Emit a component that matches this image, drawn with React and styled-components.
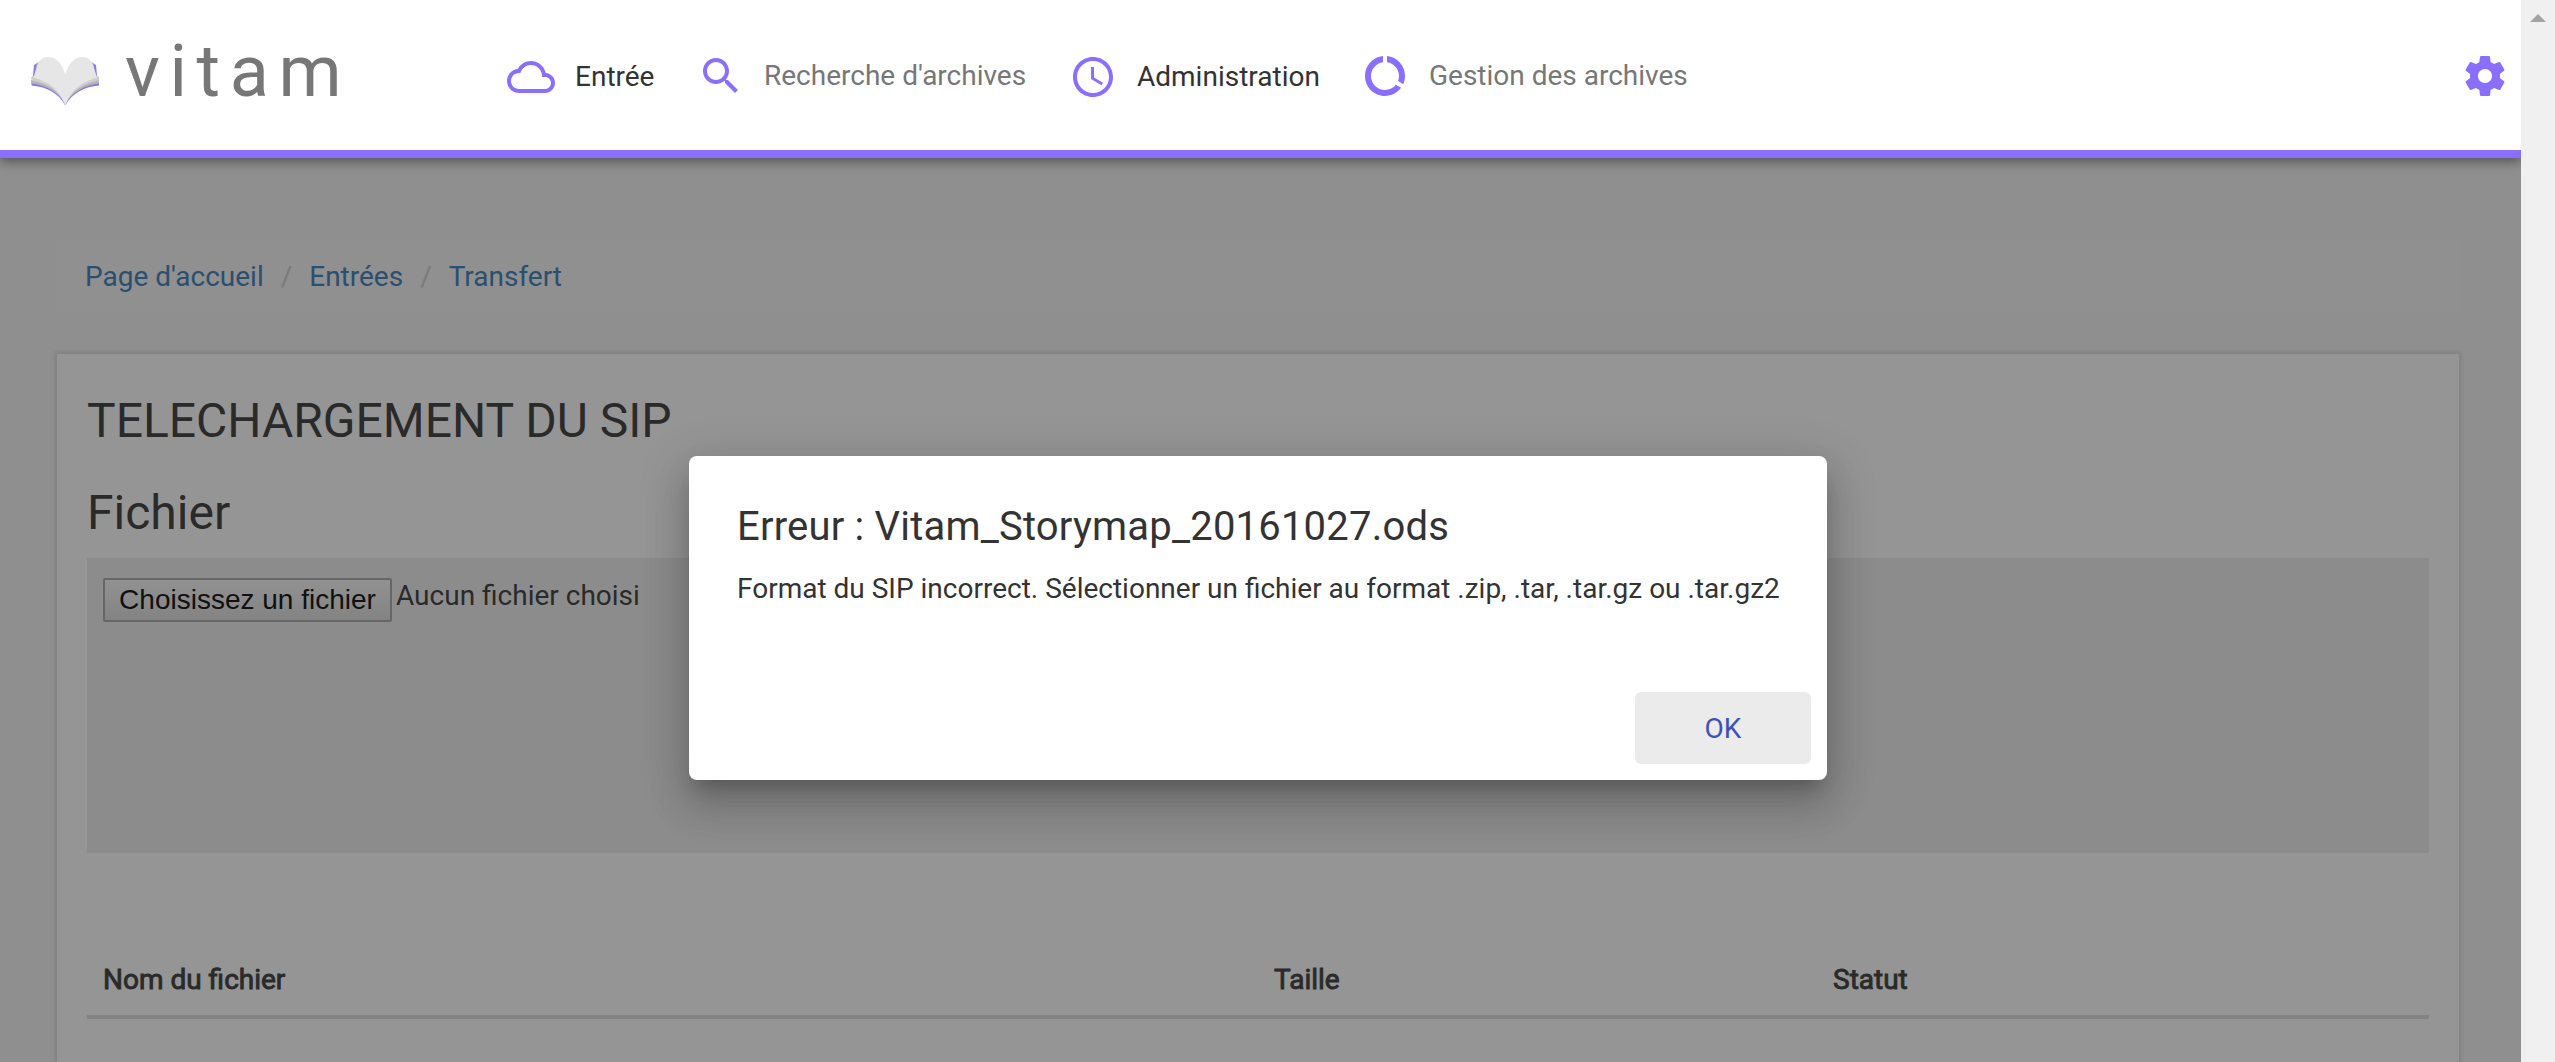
import React from "react";
import styled, { createGlobalStyle } from "styled-components";

const PURPLE = "#8a6fff";

const GlobalStyle = createGlobalStyle`
  *, *::before, *::after { box-sizing: border-box; }
  body {
    margin: 0;
    overflow: hidden;
    background: #f4f4f4;
    color: #333;
    font-family: Roboto, "Liberation Sans", sans-serif;
    font-size: 28px;
    line-height: 40px;
  }
`;

const Window = styled.div`
  display: grid;
  grid-template-columns: 1fr 34px;
  height: 1062px;
  overflow: hidden;
`;

const Viewport = styled.div`
  position: relative;
  display: flex;
  flex-direction: column;
  min-width: 0;
  overflow: hidden;
`;

const ScrollTrack = styled.div`
  display: flex;
  justify-content: center;
  padding-top: 14px;
  background: #f0f0f0;
`;

const ScrollArrow = styled.div`
  width: 16px;
  height: 8px;
  background: #a3a3a3;
  clip-path: polygon(50% 0, 100% 100%, 0 100%);
`;

const Header = styled.header`
  position: relative;
  z-index: 2;
  flex: none;
  display: flex;
  align-items: center;
  height: 158px;
  padding: 2px 12px 0 31px;
  background: #fff;
  border-bottom: 8px solid ${PURPLE};
  box-shadow: 0 4px 10px rgba(0, 0, 0, 0.4);
`;

const Brand = styled.div`
  display: flex;
  align-items: center;
  width: 476px;
  margin-top: -8px;
`;

const BookLogo = styled.svg`
  width: 70px;
  height: 52px;
  margin-top: 16px;
`;

const BrandName = styled.span`
  margin-left: 24px;
  color: #777;
  font-size: 72px;
  line-height: 84px;
  letter-spacing: 9.6px;
`;

const Nav = styled.nav`
  display: flex;
  flex: 1;
`;

const NavItem = styled.a`
  display: flex;
  align-items: center;
  width: ${(p) => p.$width}px;
  gap: ${(p) => p.$gap}px;
  padding-top: ${(p) => (p.$menu ? 2 : 0)}px;
  color: ${(p) => (p.$menu ? "#333" : "#777")};
  white-space: nowrap;
`;

const Icon = styled.svg`
  flex: none;
  width: 48px;
  height: 48px;
  fill: ${PURPLE};
`;

const Content = styled.main`
  display: flex;
  flex-direction: column;
  padding: 82px 60px 0 56px;
`;

const Breadcrumb = styled.ol`
  display: flex;
  height: 72px;
  margin: 0 0 42px;
  padding: 17px 29px 15px;
  list-style: none;
  background: #f5f5f5;
  border-radius: 8px;
`;

const Crumb = styled.li`
  color: #337ab7;

  & + &::before {
    content: "/\\00a0";
    padding: 0 10px 0 17px;
    color: #ccc;
  }
`;

const Card = styled.section`
  display: flex;
  flex-direction: column;
  height: 800px;
  margin: 0 2px 0 1px;
  padding: 0 30px;
  background: #fff;
  box-shadow: 0 0 5px 2px rgba(0, 0, 0, 0.13);
`;

const Title = styled.h2`
  margin: ${(p) => p.$top}px 0 0;
  font-size: 48px;
  font-weight: 400;
  line-height: 54px;
`;

const DropZone = styled.div`
  display: flex;
  align-items: flex-start;
  height: 295px;
  margin-top: 18px;
  padding: 20px 16px;
  background: #eee;
`;

const FileButton = styled.button`
  width: 289px;
  height: 44px;
  padding: 0;
  border: 2px solid #a6a6a6;
  border-radius: 2px;
  background: linear-gradient(#f8f8f8, #dddddd);
  color: #000;
  font-family: "Liberation Sans", Arial, sans-serif;
  font-size: 28px;
  line-height: 38px;
`;

const FileLabel = styled.span`
  margin: -2px 0 0 4px;
`;

const FileTable = styled.div`
  display: grid;
  grid-template-columns: 1171px 559px 1fr;
  margin-top: 84px;
  padding-bottom: 15px;
  border-bottom: 4px solid #ddd;
`;

const HeadCell = styled.div`
  padding: 23px 16px 0;
  -webkit-text-stroke: 0.9px #333;
`;

const Backdrop = styled.div`
  position: absolute;
  inset: 0;
  z-index: 1;
  display: flex;
  justify-content: center;
  align-items: flex-start;
  padding: 456px 5px 0 0;
  background: rgba(33, 33, 33, 0.48);
`;

const Dialog = styled.div`
  display: flex;
  flex-direction: column;
  width: 1138px;
  height: 324px;
  padding: 0 16px 16px 48px;
  border-radius: 8px;
  background: #fff;
  box-shadow: 0 14px 16px -8px rgba(0, 0, 0, 0.2),
    0 26px 38px 4px rgba(0, 0, 0, 0.14), 0 10px 48px 8px rgba(0, 0, 0, 0.12);
`;

const DialogTitle = styled.h3`
  margin: 47px 0 0;
  font-size: 40px;
  font-weight: 400;
  line-height: 48px;
  letter-spacing: 0.005em;
`;

const DialogText = styled.p`
  margin: 18px 0 0;
  white-space: nowrap;
`;

const DialogButton = styled.button`
  align-self: flex-end;
  width: 176px;
  height: 72px;
  margin-top: auto;
  padding: 2px 0 0;
  border: 0;
  border-radius: 6px;
  background: #ebebeb;
  color: #3f51b5;
  font: inherit;
`;

const NAV_ITEMS = [
  {
    label: "Entrée",
    menu: true,
    width: 190,
    gap: 20,
    path: "M19.35 10.04C18.67 6.59 15.64 4 12 4 9.11 4 6.6 5.64 5.35 8.04 2.34 8.36 0 10.91 0 14c0 3.31 2.69 6 6 6h13c2.76 0 5-2.24 5-5 0-2.64-2.05-4.78-4.65-4.96zM19 18H6c-2.21 0-4-1.79-4-4s1.79-4 4-4h.71C7.37 7.69 9.48 6 12 6c3.04 0 5.5 2.46 5.5 5.5v.5H19c1.66 0 3 1.34 3 3s-1.34 3-3 3z",
  },
  {
    label: "Recherche d'archives",
    width: 372,
    gap: 19,
    path: "M15.5 14h-.79l-.28-.27C15.41 12.59 16 11.11 16 9.5 16 5.91 13.09 3 9.5 3S3 5.91 3 9.5 5.91 16 9.5 16c1.61 0 3.09-.59 4.23-1.57l.27.28v.79l5 4.99L20.49 19l-4.99-5zm-6 0C7.01 14 5 11.99 5 9.5S7.01 5 9.5 5 14 7.01 14 9.5 11.99 14 9.5 14z",
  },
  {
    label: "Administration",
    menu: true,
    width: 292,
    gap: 20,
    path: "M11.99 2C6.47 2 2 6.48 2 12s4.47 10 9.99 10C17.52 22 22 17.52 22 12S17.52 2 11.99 2zM12 20c-4.42 0-8-3.58-8-8s3.58-8 8-8 8 3.58 8 8-3.58 8-8 8zM12.5 7H11v6l5.25 3.15.75-1.23-4.5-2.67z",
  },
  {
    label: "Gestion des archives",
    width: 400,
    gap: 20,
    path: "M13 2.05v3.03c3.39.49 6 3.39 6 6.92 0 .9-.18 1.75-.48 2.54l2.6 1.53c.56-1.24.88-2.62.88-4.07 0-5.18-3.95-9.45-9-9.95zM12 19c-3.87 0-7-3.13-7-7 0-3.53 2.61-6.43 6-6.92V2.05c-5.06.5-9 4.76-9 9.95 0 5.52 4.47 10 9.99 10 3.31 0 6.24-1.61 8.06-4.09l-2.6-1.53C16.17 17.98 14.21 19 12 19z",
  },
];

const GEAR =
  "M19.43 12.98c.04-.32.07-.64.07-.98s-.03-.66-.07-.98l2.11-1.65c.19-.15.24-.42.12-.64l-2-3.46c-.12-.22-.39-.3-.61-.22l-2.49 1c-.52-.4-1.08-.73-1.69-.98l-.38-2.65C14.46 2.18 14.25 2 14 2h-4c-.25 0-.46.18-.49.42l-.38 2.65c-.61.25-1.17.59-1.69.98l-2.49-1c-.23-.09-.49 0-.61.22l-2 3.46c-.13.22-.07.49.12.64l2.11 1.65c-.04.32-.07.65-.07.98s.03.66.07.98l-2.11 1.65c-.19.15-.24.42-.12.64l2 3.46c.12.22.39.3.61.22l2.49-1c.52.4 1.08.73 1.69.98l.38 2.65c.03.24.24.42.49.42h4c.25 0 .46-.18.49-.42l.38-2.65c.61-.25 1.17-.59 1.69-.98l2.49 1c.23.09.49 0 .61-.22l2-3.46c.12-.22.07-.49-.12-.64l-2.11-1.65zM12 15.5c-1.93 0-3.5-1.57-3.5-3.5s1.57-3.5 3.5-3.5 3.5 1.57 3.5 3.5-1.57 3.5-3.5 3.5z";

function Logo() {
  return (
    <BookLogo viewBox="0 0 70 52">
      <path d="M3 11 L7 8.500 L6 24 L1.500 27 Z M65 11 L61 8.500 L62 24 L66.500 27 Z" fill="#8c78ee" />
      <path d="M5.500 10 L10 6 L8 24 L3.500 25 Z M62.500 10 L58 6 L60 24 L64.500 25 Z" fill="#b9b8b4" />
      <path d="M0.5 26 L68 26 L68 31.500 C54 32.500 41 39 34.300 51.500 C27.600 39 15 32.500 0.5 31.500 Z" fill="#8a74f0" />
      <path d="M0.5 23 L68 23 L68 29.500 C54 31 41 38 34.300 50.500 C27.600 38 15 31 0.5 29.500 Z" fill="#b5b5b2" />
      <path d="M1 22 L67.500 22 L67.500 26.500 C53 29.500 41 36.500 34.300 50 C27.600 36.500 16 29.500 1 26.500 Z" fill="#cfcfcd" />
      <path
        d="M34.300 20.500 C31 9 25 3 17 3 C11.500 3 8 6 6.500 11 L2.500 23.500 C17 28 28 34.500 34.300 51.500 C40.600 34.500 52 28 66 23.500 L62 11 C60.500 6 57 3 51.500 3 C43.500 3 37.600 9 34.300 20.500 Z"
        fill="#e6e6e6"
      />
    </BookLogo>
  );
}

export default function App() {
  return (
    <>
      <GlobalStyle />
      <Window>
        <Viewport>
          <Header>
            <Brand>
              <Logo />
              <BrandName>vitam</BrandName>
            </Brand>
            <Nav>
              {NAV_ITEMS.map((item) => (
                <NavItem key={item.label} $width={item.width} $gap={item.gap} $menu={item.menu}>
                  <Icon viewBox="0 0 24 24">
                    <path d={item.path} />
                  </Icon>
                  {item.label}
                </NavItem>
              ))}
            </Nav>
            <Icon viewBox="0 0 24 24">
              <path d={GEAR} />
            </Icon>
          </Header>
          <Content>
            <Breadcrumb>
              <Crumb>Page d'accueil</Crumb>
              <Crumb>Entrées</Crumb>
              <Crumb>Transfert</Crumb>
            </Breadcrumb>
            <Card>
              <Title $top={40}>TELECHARGEMENT DU SIP</Title>
              <Title $top={38}>Fichier</Title>
              <DropZone>
                <FileButton>Choisissez un fichier</FileButton>
                <FileLabel>Aucun fichier choisi</FileLabel>
              </DropZone>
              <FileTable>
                <HeadCell>Nom du fichier</HeadCell>
                <HeadCell>Taille</HeadCell>
                <HeadCell>Statut</HeadCell>
              </FileTable>
            </Card>
          </Content>
          <Backdrop>
            <Dialog role="dialog">
              <DialogTitle>Erreur : Vitam_Storymap_20161027.ods</DialogTitle>
              <DialogText>
                Format du SIP incorrect. Sélectionner un fichier au format .zip, .tar, .tar.gz ou .tar.gz2
              </DialogText>
              <DialogButton>OK</DialogButton>
            </Dialog>
          </Backdrop>
        </Viewport>
        <ScrollTrack>
          <ScrollArrow />
        </ScrollTrack>
      </Window>
    </>
  );
}
